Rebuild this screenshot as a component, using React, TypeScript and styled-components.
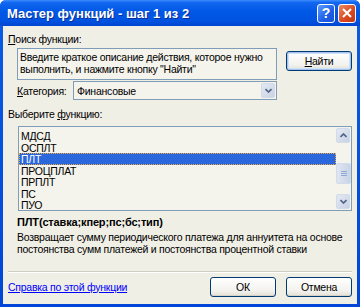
import React from 'react';
import styled, { createGlobalStyle } from 'styled-components';

const GlobalStyle = createGlobalStyle`
  html, body {
    margin: 0;
    padding: 0;
    background: #ffffff;
  }
  body {
    font-family: "Liberation Sans", Arial, sans-serif;
    font-size: 10.5px;
    letter-spacing: -0.25px;
    color: #000000;
  }
`;

const Window = styled.div`
  width: 360px;
  height: 307px;
  display: flex;
  flex-direction: column;
  background: linear-gradient(#0a5ce6, #0046d8);
  border-radius: 6px 6px 0 0;
  overflow: hidden;
`;

const TitleBar = styled.div`
  height: 26px;
  flex-shrink: 0;
  display: flex;
  align-items: center;
  padding: 0 4px 0 7px;
  background: linear-gradient(#3c8dff 0%, #1266ee 10%, #0058e6 45%, #0053e0 80%, #0046d2 100%);
`;

const Title = styled.div`
  flex: 1;
  color: #ffffff;
  font-weight: bold;
  font-size: 13px;
  letter-spacing: 0;
  padding-top: 1px;
  text-shadow: 1px 1px 0 #0a2f9a;
  white-space: nowrap;
`;

const CaptionButton = styled.div<{ $tone: 'help' | 'close' }>`
  width: 18px;
  height: 19px;
  box-sizing: border-box;
  border: 1px solid #ffffff;
  border-radius: 3px;
  margin-left: 3px;
  display: flex;
  align-items: center;
  justify-content: center;
  color: #ffffff;
  font-weight: bold;
  font-size: 14px;
  background: ${p => p.$tone === 'help'
    ? 'linear-gradient(135deg, #5f9bff, #1c5fe8 60%, #1a52d0)'
    : 'linear-gradient(135deg, #e98a64, #d8471e 60%, #c2381a)'};
`;

const Client = styled.div`
  flex: 1;
  margin: 0 3px 3px 3px;
  background: #f0efe6;
  display: flex;
  flex-direction: column;
  padding: 0 5px;
`;

const Label = styled.div<{ $top: number }>`
  height: 13px;
  line-height: 13px;
  margin-top: ${p => p.$top}px;
  white-space: nowrap;
`;

const Key = styled.span`
  text-decoration: underline;
`;

const SearchRow = styled.div`
  display: flex;
  align-items: flex-start;
  margin-top: 2px;
  padding-left: 9px;
`;

const SearchBox = styled.div`
  width: 260px;
  height: 32px;
  box-sizing: border-box;
  border: 1px solid #7f9db9;
  background: #f4f3ec;
  padding: 2px 2px 0 2px;
  line-height: 12px;
  white-space: nowrap;
  overflow: hidden;
`;

const Button = styled.div<{ $default?: boolean }>`
  width: 66px;
  height: 20px;
  box-sizing: border-box;
  border: 1px solid #003c74;
  border-radius: 3px;
  background: linear-gradient(#ffffff, #f3f2ee 70%, #e3e1d6);
  box-shadow: ${p => (p.$default ? 'inset 0 0 0 1px #a6c2ec, inset 0 0 0 2px #cfe0fb' : 'inset 0 -1px 0 #d6d0c5')};
  display: flex;
  align-items: center;
  justify-content: center;
  white-space: nowrap;
`;

const FindButton = styled(Button)`
  margin-top: 3px;
`;

const CategoryRow = styled.div`
  display: flex;
  align-items: center;
  margin-top: 1px;
  padding-left: 9px;
  height: 19px;
`;

const CategoryLabel = styled.div`
  width: 56px;
  white-space: nowrap;
`;

const Select = styled.div`
  width: 204px;
  height: 19px;
  box-sizing: border-box;
  border: 1px solid #7f9db9;
  background: #f4f3ec;
  display: flex;
  align-items: center;
  padding: 0 1px 0 3px;
`;

const SelectValue = styled.div`
  flex: 1;
`;

const ArrowButton = styled.div`
  width: 14px;
  height: 15px;
  box-sizing: border-box;
  border: 1px solid #d2dbea;
  border-radius: 2px;
  background: linear-gradient(135deg, #e4e9f3, #c8d2e4);
  display: flex;
  align-items: center;
  justify-content: center;
`;

const ListBox = styled.div`
  margin: 5px 0 0 10px;
  height: 85px;
  box-sizing: border-box;
  border: 1px solid #7f9db9;
  background: #f4f3ec;
  display: flex;
`;

const Items = styled.div`
  flex: 1;
  padding-top: 3px;
`;

const Item = styled.div<{ $selected?: boolean }>`
  height: 11.5px;
  line-height: 10px;
  padding-left: 1px;
  box-sizing: border-box;
  color: ${p => (p.$selected ? '#ffffff' : '#000000')};
  background: ${p => (p.$selected ? '#2b67dc' : 'transparent')};
  border: 1px dotted ${p => (p.$selected ? '#f0a83c' : 'transparent')};
  white-space: nowrap;
`;

const ScrollBar = styled.div`
  width: 15px;
  display: flex;
  flex-direction: column;
  padding: 1px 0;
`;

const Thumb = styled.div`
  margin-top: 20px;
  height: 21px;
  box-sizing: border-box;
  border: 1px solid #d2dbea;
  border-radius: 2px;
  background: linear-gradient(90deg, #dfe6f2, #cad4e6);
  display: flex;
  flex-direction: column;
  align-items: center;
  justify-content: center;
  gap: 1px;
`;

const Grip = styled.div`
  width: 6px;
  height: 1px;
  background: #8fa7d6;
`;

const Spacer = styled.div`
  flex: 1;
`;

const Signature = styled.div`
  margin: 5px 0 0 9px;
  font-weight: bold;
  font-size: 11px;
  letter-spacing: -0.15px;
  line-height: 13px;
  white-space: nowrap;
`;

const Description = styled.div`
  margin: 2px 0 0 9px;
  line-height: 12px;
  white-space: nowrap;
`;

const Separator = styled.div`
  height: 1px;
  background: #d0cec3;
  border-bottom: 1px solid #ffffff;
`;

const Footer = styled.div`
  display: flex;
  align-items: center;
  margin-top: 4px;
  height: 19px;
  margin-bottom: 8px;
  gap: 10px;
`;

const HelpLink = styled.a`
  flex: 1;
  color: #0000ff;
  text-decoration: underline;
  white-space: nowrap;
  cursor: pointer;
`;

const Chevron = ({ up }: { up?: boolean }) => (
  <svg width="7" height="5" viewBox="0 0 7 5">
    <path
      d={up ? 'M0.5 4 L3.5 1 L6.5 4' : 'M0.5 1 L3.5 4 L6.5 1'}
      fill="none"
      stroke="#4d6185"
      strokeWidth="1.6"
    />
  </svg>
);

const functions = ['МДСД', 'ОСПЛТ', 'ПЛТ', 'ПРОЦПЛАТ', 'ПРПЛТ', 'ПС', 'ПУО'];

function App() {
  return (
    <>
      <GlobalStyle />
      <Window>
        <TitleBar>
          <Title>Мастер функций - шаг 1 из 2</Title>
          <CaptionButton $tone="help">?</CaptionButton>
          <CaptionButton $tone="close">
            <svg width="10" height="10" viewBox="0 0 10 10">
              <path d="M1 1 L9 9 M9 1 L1 9" stroke="#ffffff" strokeWidth="2" />
            </svg>
          </CaptionButton>
        </TitleBar>
        <Client>
          <Label $top={7}><Key>П</Key>оиск функции:</Label>
          <SearchRow>
            <SearchBox>
              Введите краткое описание действия, которое нужно<br />
              выполнить, и нажмите кнопку "Найти"
            </SearchBox>
            <Spacer />
            <FindButton $default><Key>Н</Key>айти</FindButton>
          </SearchRow>
          <CategoryRow>
            <CategoryLabel><Key>К</Key>атегория:</CategoryLabel>
            <Select>
              <SelectValue>Финансовые</SelectValue>
              <ArrowButton><Chevron /></ArrowButton>
            </Select>
          </CategoryRow>
          <Label $top={8}>Выберите <Key>ф</Key>ункцию:</Label>
          <ListBox>
            <Items>
              {functions.map(name => (
                <Item key={name} $selected={name === 'ПЛТ'}>{name}</Item>
              ))}
            </Items>
            <ScrollBar>
              <ArrowButton><Chevron up /></ArrowButton>
              <Thumb><Grip /><Grip /><Grip /></Thumb>
              <Spacer />
              <ArrowButton><Chevron /></ArrowButton>
            </ScrollBar>
          </ListBox>
          <Signature>ПЛТ(ставка;кпер;пс;бс;тип)</Signature>
          <Description>
            Возвращает сумму периодического платежа для аннуитета на основе<br />
            постоянства сумм платежей и постоянства процентной ставки
          </Description>
          <Spacer />
          <Separator />
          <Footer>
            <HelpLink>Справка по этой функции</HelpLink>
            <Button>ОК</Button>
            <Button>Отмена</Button>
          </Footer>
        </Client>
      </Window>
    </>
  );
}

export default App;
